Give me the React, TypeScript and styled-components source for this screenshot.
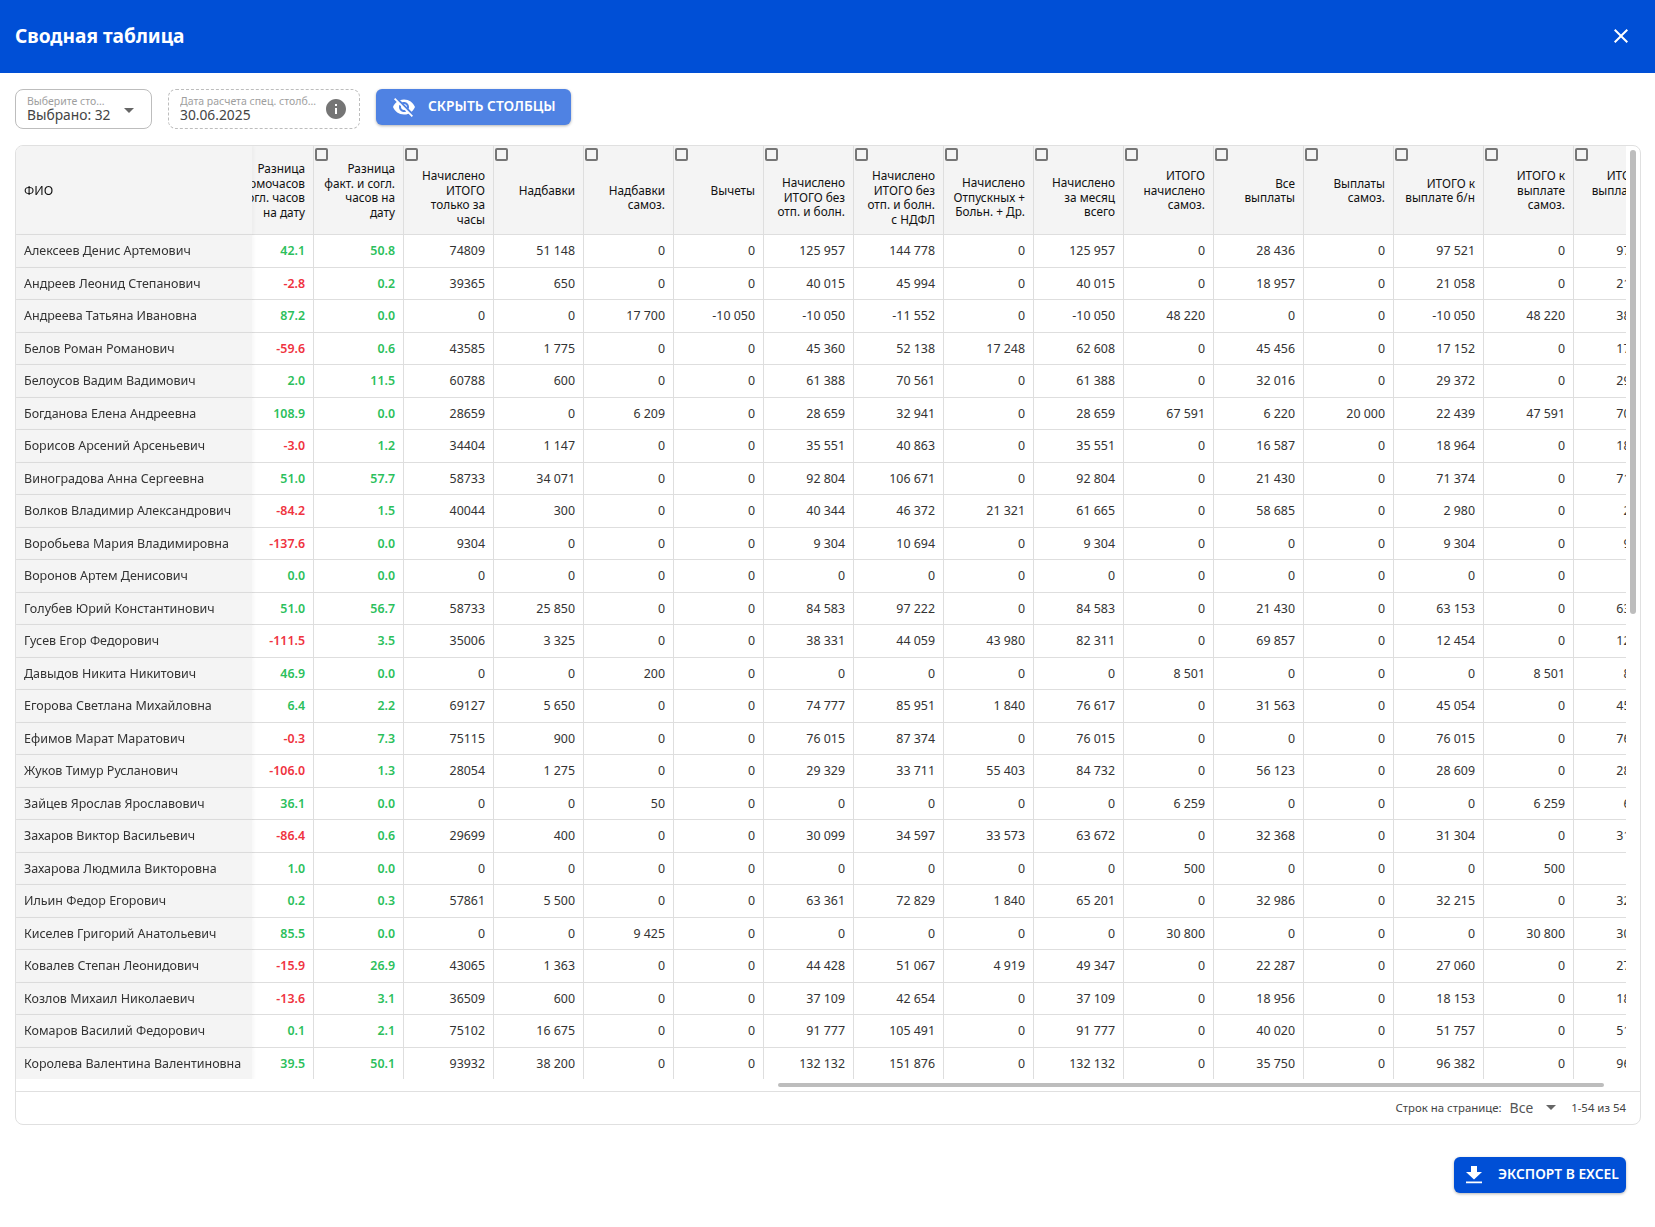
import React, { useLayoutEffect, useRef } from "react";
import styled, { createGlobalStyle } from "styled-components";

type Column = { title: string; low?: boolean; grouped?: boolean };
type RowData = [string, number, number, ...number[]];

const columns: Column[] = [
  { title: "Начислено\nИТОГО\nтолько за\nчасы", low: true },
  { title: "Надбавки", grouped: true },
  { title: "Надбавки\nсамоз.", low: true, grouped: true },
  { title: "Вычеты", grouped: true },
  { title: "Начислено\nИТОГО без\nотп. и болн.", low: true, grouped: true },
  { title: "Начислено\nИТОГО без\nотп. и болн.\nс НДФЛ", low: true, grouped: true },
  { title: "Начислено\nОтпускных +\nБольн. + Др.", low: true, grouped: true },
  { title: "Начислено\nза месяц\nвсего", low: true, grouped: true },
  { title: "ИТОГО\nначислено\nсамоз.", grouped: true },
  { title: "Все\nвыплаты", grouped: true },
  { title: "Выплаты\nсамоз.", grouped: true },
  { title: "ИТОГО к\nвыплате б/н", grouped: true },
  { title: "ИТОГО к\nвыплате\nсамоз.", grouped: true },
  { title: "ИТОГО к\nвыплате за\nмес.", grouped: true },
];

const rows: RowData[] = [
  ["Алексеев Денис Артемович", 42.1, 50.8, 74809, 51148, 0, 0, 125957, 144778, 0, 125957, 0, 28436, 0, 97521, 0],
  ["Андреев Леонид Степанович", -2.8, 0.2, 39365, 650, 0, 0, 40015, 45994, 0, 40015, 0, 18957, 0, 21058, 0],
  ["Андреева Татьяна Ивановна", 87.2, 0, 0, 0, 17700, -10050, -10050, -11552, 0, -10050, 48220, 0, 0, -10050, 48220],
  ["Белов Роман Романович", -59.6, 0.6, 43585, 1775, 0, 0, 45360, 52138, 17248, 62608, 0, 45456, 0, 17152, 0],
  ["Белоусов Вадим Вадимович", 2, 11.5, 60788, 600, 0, 0, 61388, 70561, 0, 61388, 0, 32016, 0, 29372, 0],
  ["Богданова Елена Андреевна", 108.9, 0, 28659, 0, 6209, 0, 28659, 32941, 0, 28659, 67591, 6220, 20000, 22439, 47591],
  ["Борисов Арсений Арсеньевич", -3, 1.2, 34404, 1147, 0, 0, 35551, 40863, 0, 35551, 0, 16587, 0, 18964, 0],
  ["Виноградова Анна Сергеевна", 51, 57.7, 58733, 34071, 0, 0, 92804, 106671, 0, 92804, 0, 21430, 0, 71374, 0],
  ["Волков Владимир Александрович", -84.2, 1.5, 40044, 300, 0, 0, 40344, 46372, 21321, 61665, 0, 58685, 0, 2980, 0],
  ["Воробьева Мария Владимировна", -137.6, 0, 9304, 0, 0, 0, 9304, 10694, 0, 9304, 0, 0, 0, 9304, 0],
  ["Воронов Артем Денисович", 0, 0, 0, 0, 0, 0, 0, 0, 0, 0, 0, 0, 0, 0, 0],
  ["Голубев Юрий Константинович", 51, 56.7, 58733, 25850, 0, 0, 84583, 97222, 0, 84583, 0, 21430, 0, 63153, 0],
  ["Гусев Егор Федорович", -111.5, 3.5, 35006, 3325, 0, 0, 38331, 44059, 43980, 82311, 0, 69857, 0, 12454, 0],
  ["Давыдов Никита Никитович", 46.9, 0, 0, 0, 200, 0, 0, 0, 0, 0, 8501, 0, 0, 0, 8501],
  ["Егорова Светлана Михайловна", 6.4, 2.2, 69127, 5650, 0, 0, 74777, 85951, 1840, 76617, 0, 31563, 0, 45054, 0],
  ["Ефимов Марат Маратович", -0.3, 7.3, 75115, 900, 0, 0, 76015, 87374, 0, 76015, 0, 0, 0, 76015, 0],
  ["Жуков Тимур Русланович", -106, 1.3, 28054, 1275, 0, 0, 29329, 33711, 55403, 84732, 0, 56123, 0, 28609, 0],
  ["Зайцев Ярослав Ярославович", 36.1, 0, 0, 0, 50, 0, 0, 0, 0, 0, 6259, 0, 0, 0, 6259],
  ["Захаров Виктор Васильевич", -86.4, 0.6, 29699, 400, 0, 0, 30099, 34597, 33573, 63672, 0, 32368, 0, 31304, 0],
  ["Захарова Людмила Викторовна", 1, 0, 0, 0, 0, 0, 0, 0, 0, 0, 500, 0, 0, 0, 500],
  ["Ильин Федор Егорович", 0.2, 0.3, 57861, 5500, 0, 0, 63361, 72829, 1840, 65201, 0, 32986, 0, 32215, 0],
  ["Киселев Григорий Анатольевич", 85.5, 0, 0, 0, 9425, 0, 0, 0, 0, 0, 30800, 0, 0, 0, 30800],
  ["Ковалев Степан Леонидович", -15.9, 26.9, 43065, 1363, 0, 0, 44428, 51067, 4919, 49347, 0, 22287, 0, 27060, 0],
  ["Козлов Михаил Николаевич", -13.6, 3.1, 36509, 600, 0, 0, 37109, 42654, 0, 37109, 0, 18956, 0, 18153, 0],
  ["Комаров Василий Федорович", 0.1, 2.1, 75102, 16675, 0, 0, 91777, 105491, 0, 91777, 0, 40020, 0, 51757, 0],
  ["Королева Валентина Валентиновна", 39.5, 50.1, 93932, 38200, 0, 0, 132132, 151876, 0, 132132, 0, 35750, 0, 96382, 0],
];

const money = (n: number) => String(n).replace(/\B(?=(\d{3})+(?!\d))/g, "\u00a0");

export default function App() {
  const viewport = useRef<HTMLDivElement>(null);

  // таблица прокручена вправо настолько, что вторая колонка уходит под ФИО
  useLayoutEffect(() => {
    if (viewport.current) viewport.current.scrollLeft = 28;
  }, []);

  return (
    <Page>
      <GlobalStyle />
      <Header>
        <Title>Сводная таблица</Title>
        <CloseButton aria-label="Закрыть">
          <svg width="24" height="24" viewBox="0 0 24 24" fill="currentColor">
            <path d="M19 6.41 17.59 5 12 10.59 6.41 5 5 6.41 10.59 12 5 17.59 6.41 19 12 13.41 17.59 19 19 17.59 13.41 12z" />
          </svg>
        </CloseButton>
      </Header>

      <Toolbar>
        <Field $width={137}>
          <FieldText $reserve={16}>
            <FieldLabel>Выберите столбцы</FieldLabel>
            <FieldValue>Выбрано: 32</FieldValue>
          </FieldText>
          <Caret />
        </Field>
        <Field $width={192} $dashed>
          <FieldText $reserve={6}>
            <FieldLabel>Дата расчета спец. столбцов</FieldLabel>
            <FieldValue>30.06.2025</FieldValue>
          </FieldText>
          <svg width="24" height="24" viewBox="0 0 24 24" fill="#757575">
            <path d="M12 2C6.48 2 2 6.48 2 12s4.48 10 10 10 10-4.48 10-10S17.52 2 12 2zm1 15h-2v-6h2v6zm0-8h-2V7h2v2z" />
          </svg>
        </Field>
        <ActionButton $soft $width={195} $pad={16}>
          <svg width="24" height="24" viewBox="0 0 24 24" fill="currentColor">
            <path d="M12 7c2.76 0 5 2.24 5 5 0 .65-.13 1.26-.36 1.83l2.92 2.92c1.51-1.26 2.7-2.89 3.43-4.75-1.73-4.39-6-7.5-11-7.5-1.4 0-2.74.25-3.98.7l2.16 2.16C10.74 7.13 11.35 7 12 7zM2 4.27l2.28 2.28.46.46C3.08 8.3 1.78 10.02 1 12c1.73 4.39 6 7.5 11 7.5 1.55 0 3.03-.3 4.38-.84l.42.42L19.73 22 21 20.73 3.27 3 2 4.27zM7.53 9.8l1.55 1.55c-.05.21-.08.43-.08.65 0 1.66 1.34 3 3 3 .22 0 .44-.03.65-.08l1.55 1.55c-.67.33-1.41.53-2.2.53-2.76 0-5-2.24-5-5 0-.79.2-1.53.53-2.2zm4.31-.78l3.15 3.15.02-.16c0-1.66-1.34-3-3-3l-.17.01z" />
          </svg>
          <ButtonLabel>Скрыть столбцы</ButtonLabel>
        </ActionButton>
      </Toolbar>

      <Card>
        <TableArea>
          <Viewport ref={viewport}>
            <HeadRow>
              <NameHead>ФИО</NameHead>
              <HeadCell>
                <HeadBox />
                Разница{"\n"}нормочасов{"\n"}и согл. часов{"\n"}на дату
              </HeadCell>
              <HeadCell>
                <HeadBox />
                Разница{"\n"}факт. и согл.{"\n"}часов на{"\n"}дату
              </HeadCell>
              {columns.map((col) => (
                <HeadCell key={col.title} $low={col.low}>
                  <HeadBox />
                  {col.title}
                </HeadCell>
              ))}
            </HeadRow>
            {rows.map(([name, norm, fact, ...values]) => (
              <Row key={name}>
                <NameCell>{name}</NameCell>
                <DiffCell $bad={norm < 0}>{norm.toFixed(1)}</DiffCell>
                <DiffCell $bad={fact < 0}>{fact.toFixed(1)}</DiffCell>
                {values.map((v, i) => (
                  <Cell key={i}>{columns[i].grouped ? money(v) : v}</Cell>
                ))}
                <Cell>{money(values[values.length - 2] + values[values.length - 1])}</Cell>
              </Row>
            ))}
          </Viewport>
          <ThumbY />
          <ThumbX />
        </TableArea>
        <Footer>
          <FooterText>Строк на странице:</FooterText>
          <PageSize>
            Все
            <Caret $small />
          </PageSize>
          <FooterText>1-54 из 54</FooterText>
        </Footer>
      </Card>

      <Actions>
        <ActionButton $width={172} $pad={8}>
          <svg width="24" height="24" viewBox="0 0 24 24" fill="currentColor">
            <path d="M20 9h-5V3H9v6H4l8 7.5 8-7.5zM4 18.5v1.7h16v-1.7H4z" />
          </svg>
          <ButtonLabel>Экспорт в Excel</ButtonLabel>
        </ActionButton>
      </Actions>
    </Page>
  );
}

const GlobalStyle = createGlobalStyle`
  html, body {
    margin: 0;
    background: #fff;
    font-family: "Noto Sans", "Open Sans", sans-serif;
  }
`;

const Page = styled.div`
  display: flex;
  flex-direction: column;
  width: 1655px;
  height: 1227px;
  overflow: hidden;
`;

const Header = styled.header`
  display: flex;
  align-items: center;
  justify-content: space-between;
  flex: none;
  height: 73px;
  padding: 0 15px 1px;
  box-sizing: border-box;
  background: #004fd6;
  color: #fff;
`;

const Title = styled.h1`
  margin: 0;
  font-size: 19.1px;
  font-weight: 700;
`;

const CloseButton = styled.button`
  display: flex;
  margin-right: 7px;
  padding: 0;
  border: 0;
  background: none;
  color: #fff;
`;

const Toolbar = styled.div`
  display: flex;
  align-items: flex-start;
  gap: 16px;
  flex: none;
  padding: 16px 15px;
`;

const Field = styled.div<{ $width: number; $dashed?: boolean }>`
  display: flex;
  align-items: center;
  justify-content: space-between;
  width: ${(p) => p.$width}px;
  height: 40px;
  box-sizing: border-box;
  padding: 0 11px;
  border: 1px ${(p) => (p.$dashed ? "dashed" : "solid")} #bdbdbd;
  border-radius: 8px;
`;

const FieldText = styled.div<{ $reserve: number }>`
  display: flex;
  flex-direction: column;
  min-width: 0;
  flex: 1;
  padding: 0 ${(p) => p.$reserve}px 2px 0;
`;

const FieldLabel = styled.span`
  overflow: hidden;
  color: #9e9e9e;
  font-size: 10.5px;
  line-height: 12px;
  white-space: nowrap;
  text-overflow: ellipsis;
`;

const FieldValue = styled.span`
  color: #444;
  font-size: 13.8px;
  line-height: 15px;
  white-space: nowrap;
`;

const Caret = styled.span<{ $small?: boolean }>`
  flex: none;
  width: 0;
  height: 0;
  margin-right: ${(p) => (p.$small ? 0 : 6)}px;
  margin-top: ${(p) => (p.$small ? 1 : 2)}px;
  border-left: 5px solid transparent;
  border-right: 5px solid transparent;
  border-top: 5px solid #666;
`;

const ActionButton = styled.button<{ $width: number; $pad: number; $soft?: boolean }>`
  display: flex;
  align-items: center;
  gap: 12px;
  width: ${(p) => p.$width}px;
  height: 36px;
  box-sizing: border-box;
  padding: 0 0 0 ${(p) => p.$pad}px;
  border: 0;
  border-radius: 6px;
  background: ${(p) => (p.$soft ? "#4f82e3" : "#004fd6")};
  color: #fff;
  font-family: inherit;
  font-size: 13.8px;
  font-weight: 600;
  text-transform: uppercase;
  white-space: nowrap;
  box-shadow: 0 1px 3px rgba(0, 0, 0, 0.3);
`;

const ButtonLabel = styled.span`
  margin-bottom: 3px;
`;

const Card = styled.section`
  display: flex;
  flex-direction: column;
  flex: none;
  height: 980px;
  margin: 0 14px 0 15px;
  box-sizing: border-box;
  border: 1px solid #e0e0e0;
  border-radius: 8px;
  overflow: hidden;
`;

const TableArea = styled.div`
  position: relative;
  flex: 1;
  min-height: 0;
  padding: 0 14px 12px 0;
`;

const Viewport = styled.div`
  height: 933px;
  overflow: hidden;
  color: #333;
  font-size: 12.4px;
`;

const HeadRow = styled.div`
  display: flex;
  width: max-content;
  height: 89px;
`;

const Row = styled.div`
  display: flex;
  width: max-content;
  height: 32.5px;
`;

const Cell = styled.div`
  flex: none;
  display: flex;
  align-items: center;
  justify-content: flex-end;
  width: 90px;
  box-sizing: border-box;
  padding: 0 8px;
  border-right: 1px solid #dedede;
  border-bottom: 1px solid #dedede;
  white-space: nowrap;
`;

const DiffCell = styled(Cell)<{ $bad: boolean }>`
  color: ${(p) => (p.$bad ? "#ef3340" : "#2cbf5c")};
  font-weight: 600;
`;

const HeadCell = styled.div<{ $low?: boolean }>`
  position: relative;
  flex: none;
  display: flex;
  align-items: center;
  justify-content: flex-end;
  width: 90px;
  box-sizing: border-box;
  padding: ${(p) => (p.$low ? "14px" : "0")} 8px 0;
  border-right: 1px solid #dedede;
  border-bottom: 1px solid #dedede;
  background: #f4f4f4;
  color: #111;
  font-size: 11.8px;
  line-height: 14.5px;
  text-align: right;
  white-space: pre;
`;

const HeadBox = styled.span`
  position: absolute;
  top: 2px;
  left: 1px;
  width: 13px;
  height: 13px;
  box-sizing: border-box;
  border: 2px solid #757575;
  border-radius: 2px;
`;

const NameCell = styled.div`
  position: sticky;
  left: 0;
  z-index: 2;
  flex: none;
  display: flex;
  align-items: center;
  width: 236px;
  box-sizing: border-box;
  padding-left: 8px;
  border-bottom: 1px solid #dedede;
  background: #f4f4f4;
  box-shadow: 2px 0 3px rgba(0, 0, 0, 0.03);
  font-size: 12.5px;
  white-space: nowrap;
`;

const NameHead = styled(NameCell)`
  color: #111;
`;

const ThumbY = styled.div`
  position: absolute;
  top: 4px;
  right: 4px;
  width: 6px;
  height: 464px;
  border-radius: 3px;
  background: #bdbdbd;
`;

const ThumbX = styled.div`
  position: absolute;
  left: 762px;
  right: 36px;
  bottom: 4px;
  height: 4px;
  border-radius: 2px;
  background: #bdbdbd;
`;

const Footer = styled.div`
  display: flex;
  align-items: center;
  justify-content: flex-end;
  flex: none;
  height: 33px;
  box-sizing: border-box;
  padding: 0 14px 2px 0;
  border-top: 1px solid #e0e0e0;
  color: #444;
`;

const FooterText = styled.span`
  font-size: 11.4px;
`;

const PageSize = styled.div`
  display: flex;
  align-items: center;
  gap: 13px;
  margin: 0 15px 0 8px;
  color: #555;
  font-size: 14px;
`;

const Actions = styled.div`
  display: flex;
  justify-content: flex-end;
  padding: 32px 29px 0 0;
`;
